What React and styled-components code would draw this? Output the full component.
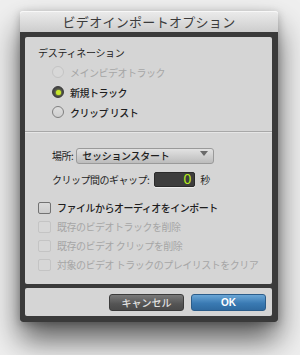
import React from "react";
import styled, { createGlobalStyle } from "styled-components";

const Global = createGlobalStyle`
  html, body { margin: 0; padding: 0; }
  body {
    width: 300px; height: 355px; overflow: hidden;
    background: #efefef;
    font-family: "Noto Sans CJK JP", "Liberation Sans", sans-serif;
  }
`;

const Stage = styled.div`
  padding: 11px 0 0 20px;
`;

const Window = styled.div`
  width: 258px;
  display: flex;
  flex-direction: column;
  border-radius: 3px 3px 2px 2px;
  box-shadow: 0 18px 30px rgba(0, 0, 0, 0.62), 0 2px 8px rgba(0, 0, 0, 0.25);
`;

const TitleBar = styled.div`
  height: 21px;
  display: flex;
  align-items: center;
  justify-content: center;
  background: linear-gradient(#ececec, #cdcdcd);
  border-radius: 3px 3px 0 0;
  box-shadow: inset 0 1px 0 #f8f8f8;
  color: #3b3b3b;
  font-size: 13px;
  letter-spacing: 0.3px;
`;

const Frame = styled.div`
  background: #3a3a3a;
  padding: 5px 6px 6px 5px;
  display: flex;
  flex-direction: column;
  gap: 4px;
  border-radius: 0 0 3px 3px;
`;

const Panel = styled.div`
  background: #d5d5d5;
  border-radius: 2px;
  height: ${(p) => p.$h}px;
  display: flex;
  flex-direction: column;
`;

const Section = styled.div`
  padding: ${(p) => p.$pad};
  display: flex;
  flex-direction: column;
`;

const Heading = styled.div`
  font-size: 10px;
  line-height: 14px;
  color: #222;
  margin-bottom: 2px;
  letter-spacing: -0.3px;
`;

const Row = styled.div`
  display: flex;
  align-items: center;
  height: ${(p) => p.$h || 20}px;
  padding-left: ${(p) => p.$indent || 0}px;
  gap: ${(p) => p.$gap || 6}px;
  margin-top: ${(p) => p.$mt || 0}px;
`;

const Label = styled.span`
  font-size: 10px;
  color: ${(p) => (p.$disabled ? "#a6a6a6" : "#1e1e1e")};
  font-weight: ${(p) => (p.$bold ? 500 : 400)};
  white-space: pre;
  letter-spacing: -0.5px;
`;

const Radio = styled.span`
  flex-shrink: 0;
  width: 12px;
  height: 12px;
  box-sizing: border-box;
  border-radius: 50%;
  display: flex;
  align-items: center;
  justify-content: center;
  border: 1px solid ${(p) => (p.$on ? "#3a3a3a" : p.$disabled ? "#c4c4c4" : "#808080")};
  background: ${(p) =>
    p.$on ? "radial-gradient(circle, #5a5a5a, #3c3c3c)" : p.$disabled ? "#d8d8d8" : "linear-gradient(#dedede, #cfcfcf)"};
  &::after {
    content: "";
    display: ${(p) => (p.$on ? "block" : "none")};
    width: 5px;
    height: 5px;
    border-radius: 50%;
    background: #c8e82a;
    box-shadow: 0 0 2px #c8e82a;
  }
`;

const Separator = styled.div`
  height: 1px;
  background: #a8a8a8;
  border-bottom: 1px solid #e6e6e6;
`;

const Select = styled.div`
  flex-shrink: 0;
  width: 138px;
  height: 16px;
  box-sizing: border-box;
  border-radius: 3px;
  border: 1px solid #9a9a9a;
  background: linear-gradient(#e2e2e2, #bcbcbc);
  display: flex;
  align-items: center;
  justify-content: space-between;
  padding: 0 5px 0 5px;
  font-size: 10px;
  color: #1e1e1e;
  font-weight: 500;
  letter-spacing: -0.3px;
`;

const Caret = styled.span`
  width: 0;
  height: 0;
  border-left: 4px solid transparent;
  border-right: 4px solid transparent;
  border-top: 5px solid #6a6a6a;
  margin-top: -4px;
`;

const NumField = styled.div`
  flex-shrink: 0;
  width: 41px;
  height: 15px;
  box-sizing: border-box;
  background: #3d3d3d;
  border: 1px solid #2a2a2a;
  border-radius: 2px;
  box-shadow: 0 1px 0 #eeeeee;
  color: #b6ea1e;
  font-family: "Liberation Sans", sans-serif;
  font-size: 14px;
  line-height: 13px;
  text-align: right;
  padding-right: 3px;
`;

const Check = styled.span`
  flex-shrink: 0;
  width: 13px;
  height: 12px;
  box-sizing: border-box;
  border-radius: 2px;
  border: 1px solid ${(p) => (p.$disabled ? "#c4c4c4" : "#727272")};
  background: ${(p) => (p.$disabled ? "#d7d7d7" : "linear-gradient(#dadada, #cccccc)")};
`;

const Footer = styled.div`
  display: flex;
  justify-content: flex-end;
  align-items: center;
  gap: 7px;
  height: 100%;
  padding-right: 6px;
`;

const Button = styled.div`
  width: 75px;
  height: 17px;
  box-sizing: border-box;
  border-radius: 3px;
  display: flex;
  align-items: center;
  justify-content: center;
  font-size: 10px;
  color: ${(p) => (p.$primary ? "#ffffff" : "#e0e0e0")};
  border: 1px solid ${(p) => (p.$primary ? "#2c5d8a" : "#3c3c3c")};
  background: ${(p) =>
    p.$primary ? "linear-gradient(#6aa6d6, #3a7ab3 55%, #2f6aa0)" : "linear-gradient(#7a7a7a, #545454 60%, #4a4a4a)"};
  font-family: ${(p) => (p.$primary ? '"Liberation Sans", sans-serif' : '"Noto Sans CJK JP", sans-serif')};
  font-weight: ${(p) => (p.$primary ? 700 : 500)};
`;

export default function App() {
  return (
    <>
      <Global />
      <Stage>
        <Window>
          <TitleBar>ビデオインポートオプション</TitleBar>
          <Frame>
            <Panel $h={247}>
              <Section $pad="9px 0 9px 13px">
                <Heading>デスティネーション</Heading>
                <Row $indent={14}>
                  <Radio $disabled />
                  <Label $disabled>メインビデオトラック</Label>
                </Row>
                <Row $indent={14}>
                  <Radio $on />
                  <Label $bold>新規トラック</Label>
                </Row>
                <Row $indent={14}>
                  <Radio />
                  <Label $bold>クリップ リスト</Label>
                </Row>
              </Section>
              <Separator />
              <Section $pad="14px 0 0 27px">
                <Row $h={17} $gap={3}>
                  <Label>場所:</Label>
                  <Select>
                    <span>セッションスタート</span>
                    <Caret />
                  </Select>
                </Row>
                <Row $h={17} $gap={5} $mt={7}>
                  <Label>クリップ間のギャップ:</Label>
                  <NumField>0</NumField>
                  <Label>秒</Label>
                </Row>
              </Section>
              <Section $pad="10px 0 0 13px">
                <Row $h={19}>
                  <Check />
                  <Label $bold>ファイルからオーディオをインポート</Label>
                </Row>
                <Row $h={19}>
                  <Check $disabled />
                  <Label $disabled>既存のビデオトラックを削除</Label>
                </Row>
                <Row $h={19}>
                  <Check $disabled />
                  <Label $disabled>既存のビデオ クリップを削除</Label>
                </Row>
                <Row $h={19}>
                  <Check $disabled />
                  <Label $disabled>対象のビデオ トラックのプレイリストをクリア</Label>
                </Row>
              </Section>
            </Panel>
            <Panel $h={28}>
              <Footer>
                <Button>キャンセル</Button>
                <Button $primary>OK</Button>
              </Footer>
            </Panel>
          </Frame>
        </Window>
      </Stage>
    </>
  );
}
